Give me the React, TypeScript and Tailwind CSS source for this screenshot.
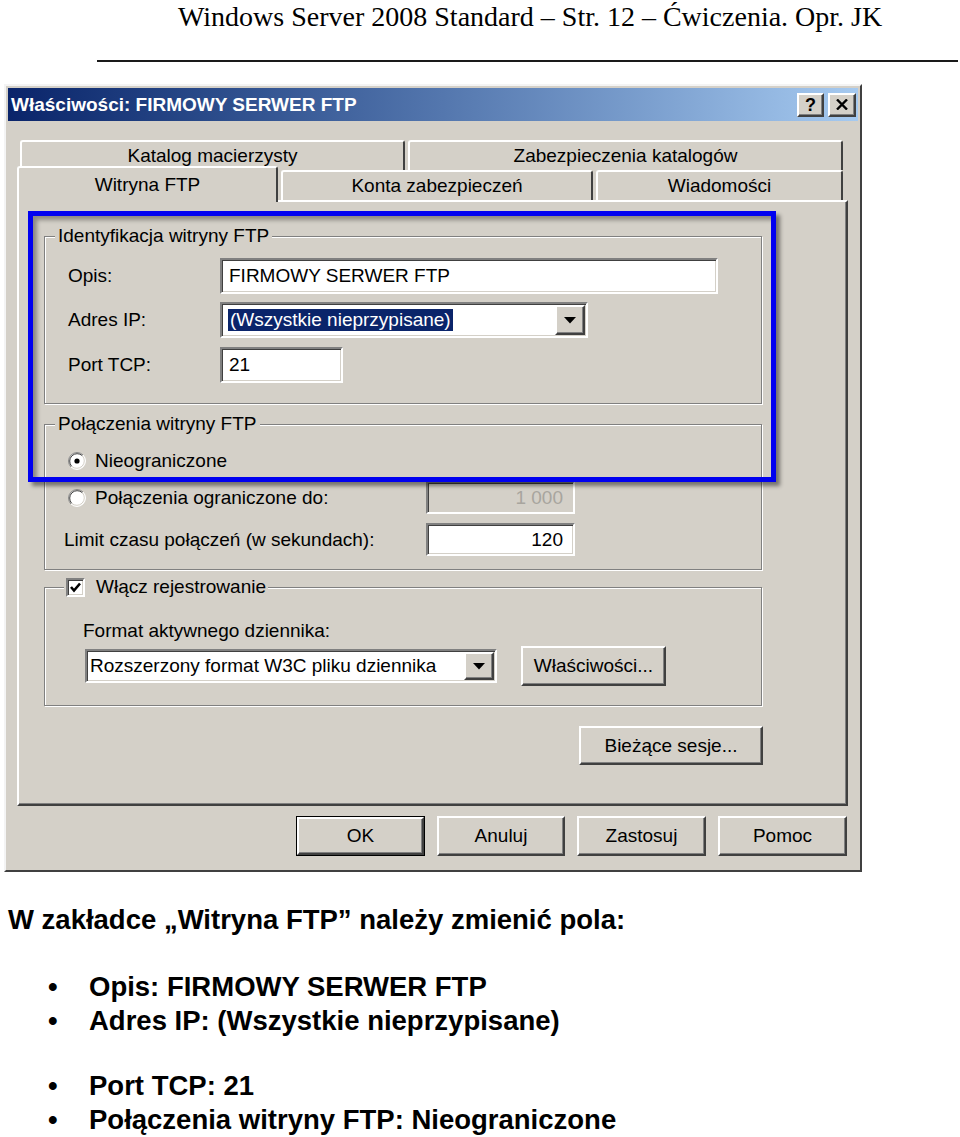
import React from "react";

const raised =
  "bg-[#d4d0c8] border-2 border-t-white border-l-white border-r-[#404040] border-b-[#404040] shadow-[inset_-1px_-1px_0_#808080]";
const sunken =
  "border-2 border-t-[#808080] border-l-[#808080] border-r-white border-b-white shadow-[inset_1px_1px_0_#404040,inset_-1px_-1px_0_#d4d0c8]";
const tabCls =
  "bg-[#d4d0c8] border-t-2 border-l-2 border-r-2 border-t-white border-l-white border-r-[#404040] rounded-t-[3px] flex items-center justify-center";
const groupCls =
  "border border-[#808080] shadow-[inset_1px_1px_0_#ffffff,1px_1px_0_#ffffff]";

function DropBtn() {
  return (
    <div className={`${raised} w-[30px] h-full flex items-center justify-center shrink-0`}>
      <svg width="12" height="7" viewBox="0 0 12 7">
        <path d="M0 0 H12 L6 6.5 Z" fill="#000" />
      </svg>
    </div>
  );
}

function Radio({ checked }: { checked?: boolean }) {
  return (
    <svg width="18" height="18" viewBox="0 0 18 18" className="shrink-0">
      <circle cx="9" cy="9" r="8.5" fill="#fff" />
      <path d="M2.99 15.01 A8.5 8.5 0 0 1 15.01 2.99" stroke="#808080" strokeWidth="1" fill="none" />
      <path d="M15.01 2.99 A8.5 8.5 0 0 1 2.99 15.01" stroke="#ffffff" strokeWidth="1" fill="none" />
      <path d="M3.7 14.3 A7.5 7.5 0 0 1 14.3 3.7" stroke="#404040" strokeWidth="1" fill="none" />
      <path d="M14.3 3.7 A7.5 7.5 0 0 1 3.7 14.3" stroke="#d4d0c8" strokeWidth="1" fill="none" />
      {checked && <circle cx="9" cy="9" r="2.6" fill="#000" />}
    </svg>
  );
}

function Checkbox() {
  return (
    <div className={`${sunken} w-[19px] h-[19px] bg-white shrink-0 flex items-center justify-center`}>
      <svg width="13" height="13" viewBox="0 0 13 13">
        <path d="M2 6 L5 9.5 L11 2.5" stroke="#000" strokeWidth="2.6" fill="none" />
      </svg>
    </div>
  );
}

function Dialog() {
  return (
    <div className="ml-[4px] mt-[22px] w-[858px] h-[788px] bg-[#d4d0c8] border-2 border-t-[#f4f4f4] border-l-[#f4f4f4] border-r-[#404040] border-b-[#404040] p-[2px] font-['Liberation_Sans',Arial,sans-serif] text-[19px] leading-[22px] text-black">
      {/* title bar */}
      <div className="h-[33px] flex items-center bg-linear-to-r from-[#0a246a] to-[#a6caf0] pl-[3px] pr-[2px]">
        <span className="font-bold text-white text-[19px] whitespace-nowrap">Właściwości: FIRMOWY SERWER FTP</span>
        <div className="ml-auto flex gap-[4px]">
          <div className={`${raised} w-[27px] h-[24px] flex items-center justify-center font-bold text-[18px]`}>?</div>
          <div className={`${raised} w-[28px] h-[24px] flex items-center justify-center`}>
            <svg width="12" height="11" viewBox="0 0 12 11">
              <path d="M1 0.5 L11 10.5 M11 0.5 L1 10.5" stroke="#000" strokeWidth="2.4" />
            </svg>
          </div>
        </div>
      </div>

      <div className="pl-[9px] pt-[19px]">
        {/* tabs row 1 */}
        <div className="flex h-[30px] pl-[3px] gap-[3px]">
          <div className={`${tabCls} w-[385px]`}>Katalog macierzysty</div>
          <div className={`${tabCls} w-[435px]`}>Zabezpieczenia katalogów</div>
        </div>
        {/* tabs row 2 */}
        <div className="flex h-[30px] relative z-10">
          <div className={`${tabCls} w-[261px] h-[36px] -mt-[4px] self-start`}>Witryna FTP</div>
          <div className={`${tabCls} w-[312px] ml-[3px]`}>Konta zabezpieczeń</div>
          <div className={`${tabCls} w-[247px] ml-[3px]`}>Wiadomości</div>
        </div>

        {/* panel */}
        <div className="w-[831px] h-[606px] border-2 border-t-white border-l-white border-r-[#404040] border-b-[#404040] shadow-[inset_-1px_-1px_0_#808080]">
          {/* group 1 */}
          <div className={`${groupCls} ml-[25px] mt-[34px] w-[718px] h-[168px]`}>
            <div className="-mt-[12px] ml-[10px] w-fit px-[3px] bg-[#d4d0c8] h-[22px] whitespace-nowrap">Identyfikacja witryny FTP</div>
            <div className="mt-[11px] flex items-center h-[36px] pl-[23px]">
              <div className="w-[152px]">Opis:</div>
              <div className={`${sunken} bg-white w-[498px] h-full flex items-center pl-[7px]`}>FIRMOWY SERWER FTP</div>
            </div>
            <div className="mt-[8px] flex items-center h-[36px] pl-[23px]">
              <div className="w-[152px]">Adres IP:</div>
              <div className={`${sunken} bg-white w-[368px] h-full flex items-stretch`}>
                <div className="flex-1 flex items-center pl-[6px]">
                  <span className="bg-[#0a246a] text-white px-[2px] h-[22px] whitespace-nowrap">(Wszystkie nieprzypisane)</span>
                </div>
                <div className="py-[1px] pr-[1px]">
                  <DropBtn />
                </div>
              </div>
            </div>
            <div className="mt-[9px] flex items-center h-[36px] pl-[23px]">
              <div className="w-[152px]">Port TCP:</div>
              <div className={`${sunken} bg-white w-[123px] h-full flex items-center pl-[7px]`}>21</div>
            </div>
          </div>

          {/* group 2 */}
          <div className={`${groupCls} ml-[25px] mt-[20px] w-[718px] h-[146px]`}>
            <div className="-mt-[12px] ml-[10px] w-fit px-[3px] bg-[#d4d0c8] h-[22px] whitespace-nowrap">Połączenia witryny FTP</div>
            <div className="mt-[15px] h-[22px] pl-[23px] flex items-center">
              <Radio checked />
              <span className="ml-[9px]">Nieograniczone</span>
            </div>
            <div className="mt-[9px] h-[33px] pl-[23px] flex items-center">
              <div className="w-[358px] flex items-center">
                <Radio />
                <span className="ml-[9px] whitespace-nowrap">Połączenia ograniczone do:</span>
              </div>
              <div className={`${sunken} bg-[#d4d0c8] w-[149px] h-full flex items-center justify-end pr-[10px] text-[#a8a59e]`}>1 000</div>
            </div>
            <div className="mt-[9px] h-[33px] pl-[19px] flex items-center">
              <div className="w-[362px] whitespace-nowrap">Limit czasu połączeń (w sekundach):</div>
              <div className={`${sunken} bg-white w-[149px] h-full flex items-center justify-end pr-[10px]`}>120</div>
            </div>
          </div>

          {/* group 3 */}
          <div className={`${groupCls} ml-[25px] mt-[17px] w-[718px] h-[119px]`}>
            <div className="-mt-[12px] ml-[19px] w-fit px-[2px] bg-[#d4d0c8] h-[22px] flex items-center whitespace-nowrap">
              <Checkbox />
              <span className="ml-[11px]">Włącz rejestrowanie</span>
            </div>
            <div className="mt-[22px] h-[22px] pl-[38px]">Format aktywnego dziennika:</div>
            <div className="mt-[4px] h-[40px] pl-[40px] flex items-center">
              <div className={`${sunken} bg-white w-[412px] h-[34px] flex items-stretch`}>
                <div className="flex-1 flex items-center pl-[3px] whitespace-nowrap">Rozszerzony format W3C pliku dziennika</div>
                <div className="py-[1px] pr-[1px]">
                  <DropBtn />
                </div>
              </div>
              <div className={`${raised} ml-[24px] w-[145px] h-[40px] flex items-center justify-center`}>Właściwości...</div>
            </div>
          </div>

          <div className={`${raised} mt-[20px] ml-[560px] w-[184px] h-[39px] flex items-center justify-center`}>Bieżące sesje...</div>
        </div>

        {/* bottom buttons */}
        <div className="mt-[10px] ml-[279px] flex gap-[12px]">
          <div className="w-[129px] h-[40px] border border-black">
            <div className={`${raised} w-full h-full flex items-center justify-center`}>OK</div>
          </div>
          <div className={`${raised} w-[128px] h-[40px] flex items-center justify-center`}>Anuluj</div>
          <div className={`${raised} w-[129px] h-[40px] flex items-center justify-center`}>Zastosuj</div>
          <div className={`${raised} w-[129px] h-[40px] flex items-center justify-center`}>Pomoc</div>
        </div>
      </div>
    </div>
  );
}

function Bullet({ children }: { children: React.ReactNode }) {
  return (
    <div className="flex h-[34px]">
      <span className="ml-[48px] w-[41px]">•</span>
      <span className="whitespace-nowrap">{children}</span>
    </div>
  );
}

export default function App() {
  return (
    <div className="relative w-[960px] h-[1137px] overflow-hidden bg-white text-black">
      <div className="pl-[178px] pt-[3px] text-[28px] leading-[28px] font-['Liberation_Serif','Times_New_Roman',serif] whitespace-nowrap">
        Windows Server 2008 Standard – Str. 12 – Ćwiczenia. Opr. JK
      </div>
      <div className="ml-[97px] mt-[29px] w-[861px] h-[2px] bg-[#1a1a1a]" />

      <Dialog />

      <div className="mt-[31px] font-['Liberation_Sans',Arial,sans-serif] font-bold text-[27.5px] leading-[34px]">
        <div className="pl-[8px] whitespace-nowrap">W zakładce „Witryna FTP” należy zmienić pola:</div>
        <div className="mt-[33px]">
          <Bullet>Opis: FIRMOWY SERWER FTP</Bullet>
          <Bullet>Adres IP: (Wszystkie nieprzypisane)</Bullet>
          <div className="h-[31px]" />
          <Bullet>Port TCP: 21</Bullet>
          <Bullet>Połączenia witryny FTP: Nieograniczone</Bullet>
        </div>
      </div>

      {/* blue highlight overlay */}
      <div className="absolute left-[28px] top-[211px] w-[748px] h-[271px] border-[5px] border-[#0000f0] shadow-[4px_4px_4px_rgba(0,0,0,0.45),inset_4px_4px_4px_rgba(0,0,0,0.35)] pointer-events-none" />
    </div>
  );
}
